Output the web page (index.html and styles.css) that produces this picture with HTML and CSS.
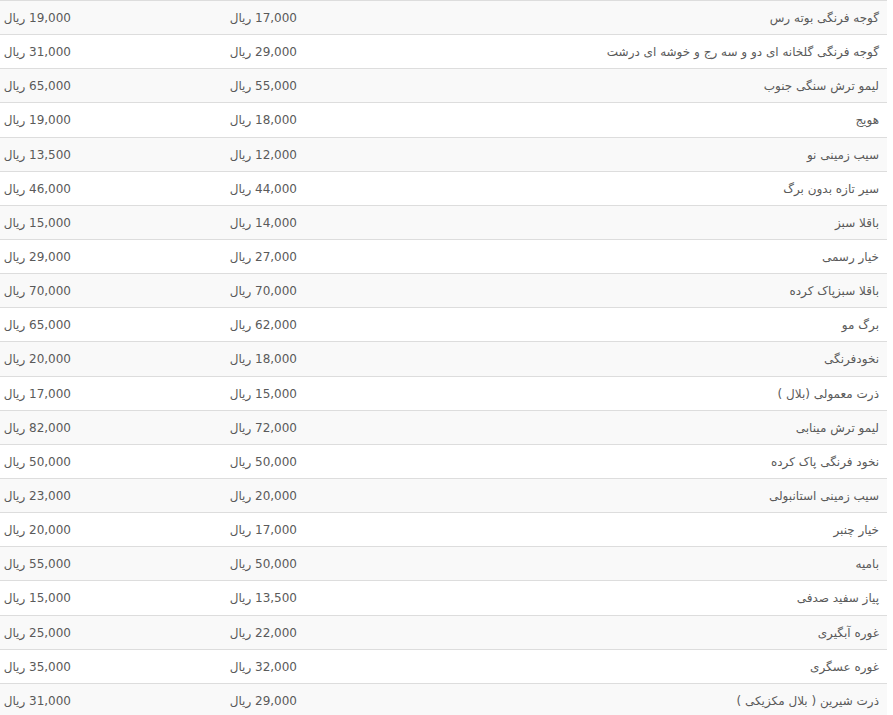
FILE: index.html
```html
<!DOCTYPE html>
<html lang="fa">
<head>
<meta charset="utf-8">
<title>قیمت میوه و تره بار</title>
<link rel="stylesheet" href="styles.css">
</head>
<body>
<table class="prices" dir="rtl">
<colgroup><col class="c-name"><col class="c-min"><col class="c-max"></colgroup>
<tbody>
<tr><td>گوجه فرنگی بوته رس</td><td>17,000 ریال</td><td>19,000 ریال</td></tr>
<tr><td>گوجه فرنگی گلخانه ای دو و سه رج و خوشه ای درشت</td><td>29,000 ریال</td><td>31,000 ریال</td></tr>
<tr><td>لیمو ترش سنگی جنوب</td><td>55,000 ریال</td><td>65,000 ریال</td></tr>
<tr><td>هویج</td><td>18,000 ریال</td><td>19,000 ریال</td></tr>
<tr><td>سیب زمینی نو</td><td>12,000 ریال</td><td>13,500 ریال</td></tr>
<tr><td>سیر تازه بدون برگ</td><td>44,000 ریال</td><td>46,000 ریال</td></tr>
<tr><td>باقلا سبز</td><td>14,000 ریال</td><td>15,000 ریال</td></tr>
<tr><td>خیار رسمی</td><td>27,000 ریال</td><td>29,000 ریال</td></tr>
<tr><td>باقلا سبزپاک کرده</td><td>70,000 ریال</td><td>70,000 ریال</td></tr>
<tr><td>برگ مو</td><td>62,000 ریال</td><td>65,000 ریال</td></tr>
<tr><td>نخودفرنگی</td><td>18,000 ریال</td><td>20,000 ریال</td></tr>
<tr><td>ذرت معمولی (بلال )</td><td>15,000 ریال</td><td>17,000 ریال</td></tr>
<tr><td>لیمو ترش مینابی</td><td>72,000 ریال</td><td>82,000 ریال</td></tr>
<tr><td>نخود فرنگی پاک کرده</td><td>50,000 ریال</td><td>50,000 ریال</td></tr>
<tr><td>سیب زمینی استانبولی</td><td>20,000 ریال</td><td>23,000 ریال</td></tr>
<tr><td>خیار چنبر</td><td>17,000 ریال</td><td>20,000 ریال</td></tr>
<tr><td>بامیه</td><td>50,000 ریال</td><td>55,000 ریال</td></tr>
<tr><td>پیاز سفید صدفی</td><td>13,500 ریال</td><td>15,000 ریال</td></tr>
<tr><td>غوره آبگیری</td><td>22,000 ریال</td><td>25,000 ریال</td></tr>
<tr><td>غوره عسگری</td><td>32,000 ریال</td><td>35,000 ریال</td></tr>
<tr><td>ذرت شیرین ( بلال مکزیکی )</td><td>29,000 ریال</td><td>31,000 ریال</td></tr>
</tbody>
</table>
</body>
</html>
```
FILE: styles.css
```css
html, body {
  margin: 0;
  padding: 0;
  background: #fff;
}
body {
  font-family: "DejaVu Sans", Verdana, sans-serif;
  font-size: 12px;
  color: #5a5a5a;
  direction: ltr;
}
.prices {
  width: 887px;
  margin: 0;
  border-collapse: collapse;
  border-spacing: 0;
  table-layout: fixed;
  direction: rtl;
}
.c-name { width: 582px; }
.c-min { width: 226px; }
.c-max { width: 79px; }
.prices td {
  padding: 9px 8px 7px;
  line-height: 1.42857;
  border-top: 1px solid #ddd;
  text-align: right;
  white-space: nowrap;
  vertical-align: top;
}
.prices tr:nth-child(odd) td {
  background: #f9f9f9;
}
```
